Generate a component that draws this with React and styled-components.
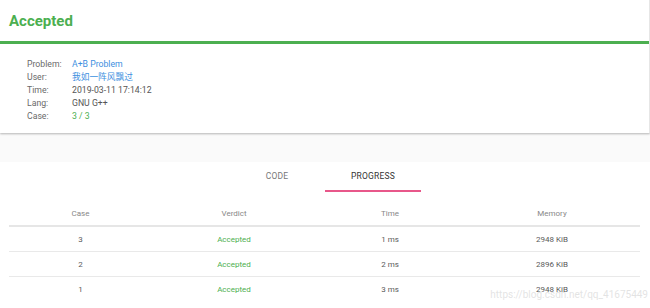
import React from 'react'
import styled, { createGlobalStyle } from 'styled-components'

const Global = createGlobalStyle`
  html, body {
    margin: 0;
    padding: 0;
    background: #fafafa;
    font-family: Roboto, "Noto Sans CJK SC", sans-serif;
  }
`

const Page = styled.div`
  position: relative;
  width: 650px;
  height: 308px;
  overflow: hidden;
  background: #fafafa;
`

const Card = styled.div`
  width: 649px;
  background: #fff;
  border-right: 1px solid #e6e6e6;
  box-shadow: 0 1px 2px rgba(0, 0, 0, 0.28);
`

const Head = styled.div`
  height: 44px;
  display: flex;
  align-items: center;
  padding: 1px 9px 0;
  box-sizing: border-box;
  border-bottom: 3px solid #4caf50;
  h1 {
    margin: 0;
    font-size: 15px;
    font-weight: 700;
    color: #4caf50;
  }
`

const Info = styled.div`
  padding: 14px 0 10px 27px;
`

const InfoRow = styled.div`
  display: flex;
  height: 13px;
  line-height: 13px;
  font-size: 8.7px;
`

const Label = styled.span`
  width: 45px;
  color: #6a6a6a;
`

const Value = styled.span`
  color: ${(p) => p.color || '#555'};
`

const Spacer = styled.div`
  height: 29px;
`

const Tabs = styled.div`
  display: flex;
  justify-content: center;
  background: #fff;
  height: 30px;
`

const Tab = styled.div`
  width: 96px;
  display: flex;
  align-items: center;
  justify-content: center;
  font-size: 8.5px;
  letter-spacing: 0.2px;
  color: ${(p) => (p.active ? '#333' : '#777')};
  border-bottom: 2px solid ${(p) => (p.active ? '#e8578a' : 'transparent')};
  box-sizing: border-box;
`

const Body = styled.div`
  background: #fff;
  padding: 9px 10px 0 9px;
  height: 116px;
`

const Row = styled.div`
  display: grid;
  grid-template-columns: 143px 164px 148px 176px;
  height: 24px;
  align-items: center;
  border-bottom: ${(p) => (p.head ? '2px solid #e6e6e6' : p.last ? 'none' : '1px solid #e9e9e9')};
  font-size: 8px;
  color: ${(p) => (p.head ? '#888' : '#5a5a5a')};
  text-align: center;
`

const Verdict = styled.span`
  color: #4caf50;
`

const Watermark = styled.div`
  position: absolute;
  right: 2px;
  bottom: 8px;
  font-size: 10px;
  color: rgba(200, 200, 200, 0.5);
`

const cases = [
  { id: 3, time: '1 ms', mem: '2948 KiB' },
  { id: 2, time: '2 ms', mem: '2896 KiB' },
  { id: 1, time: '3 ms', mem: '2948 KiB' },
]

export default function App() {
  return (
    <Page>
      <Global />
      <Card>
        <Head>
          <h1>Accepted</h1>
        </Head>
        <Info>
          <InfoRow><Label>Problem:</Label><Value color="#3d8fe0">A+B Problem</Value></InfoRow>
          <InfoRow><Label>User:</Label><Value color="#3d8fe0">我如一阵风飘过</Value></InfoRow>
          <InfoRow><Label>Time:</Label><Value>2019-03-11 17:14:12</Value></InfoRow>
          <InfoRow><Label>Lang:</Label><Value>GNU G++</Value></InfoRow>
          <InfoRow><Label>Case:</Label><Value color="#4caf50">3 / 3</Value></InfoRow>
        </Info>
      </Card>
      <Spacer />
      <Tabs>
        <Tab>CODE</Tab>
        <Tab active>PROGRESS</Tab>
      </Tabs>
      <Body>
        <Row head>
          <span>Case</span>
          <span>Verdict</span>
          <span>Time</span>
          <span>Memory</span>
        </Row>
        {cases.map((c, i) => (
          <Row key={c.id} last={i === cases.length - 1}>
            <span>{c.id}</span>
            <Verdict>Accepted</Verdict>
            <span>{c.time}</span>
            <span>{c.mem}</span>
          </Row>
        ))}
      </Body>
      <Watermark>https://blog.csdn.net/qq_41675449</Watermark>
    </Page>
  )
}
